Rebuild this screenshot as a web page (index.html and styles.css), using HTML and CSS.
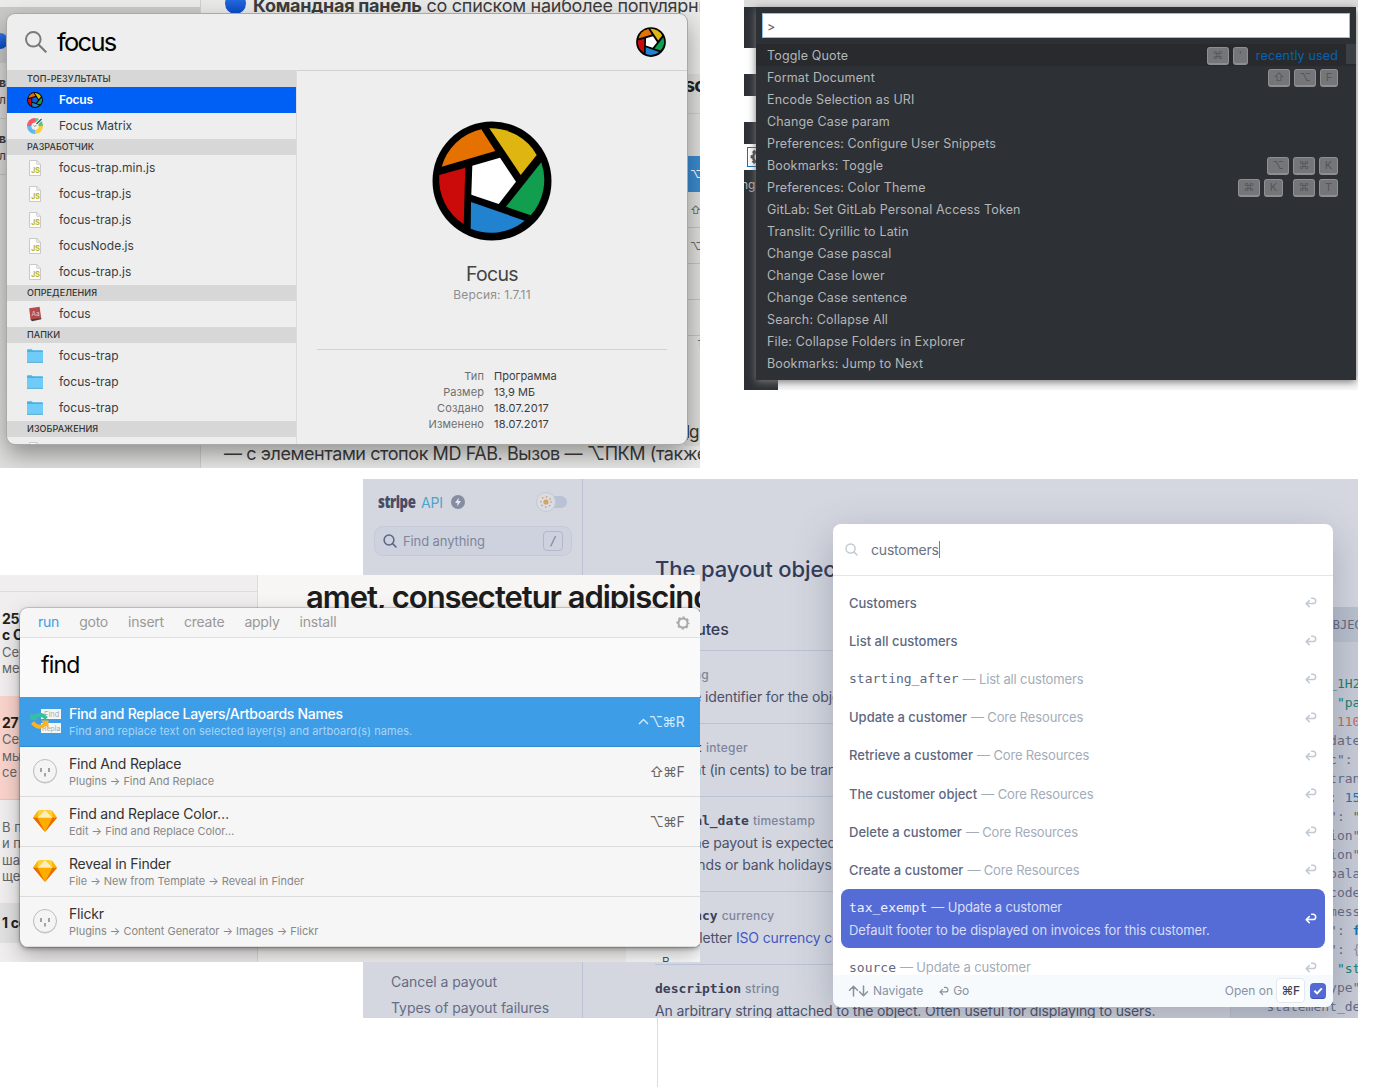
FILE: index.html
```html
<!DOCTYPE html>
<html lang="ru">
<head>
<meta charset="utf-8">
<title>Command palettes</title>
<link rel="stylesheet" href="styles.css">
</head>
<body>
<svg class="defs" width="0" height="0" aria-hidden="true">
  <defs>
    <symbol id="shutter" viewBox="0 0 120 120">
      <circle cx="60" cy="60" r="59.5" fill="#000"/>
      <path d="M49.3 8.3 63.3 30 9.7 45.7A53 53 0 0 1 49.3 8.3Z" fill="#e57200"/>
      <path d="M57.3 7.3 88.7 54 104.7 34A53 53 0 0 0 57.3 7.3Z" fill="#dfb611"/>
      <path d="M109.3 41.3 74 85.7 98.7 94.3A53 53 0 0 0 109.3 41.3Z" fill="#119e4e"/>
      <path d="M39 81 92.7 99.7A53 53 0 0 1 38.7 107.7Z" fill="#2182cf"/>
      <path d="M7.3 54 33.3 46.7 31.7 103A53 53 0 0 1 7.3 54Z" fill="#cb0a0a"/>
      <path class="shutter-core" d="M40.3 44.7 68 36.7 84 60.7 66.7 83 39.3 73.7Z"/>
    </symbol>
    <symbol id="jsfile" viewBox="0 0 12 16">
      <path d="M.5.5h7.3l3.7 3.7v11.3H.5Z" fill="#fdfdfb" stroke="#c9c9c9"/>
      <path d="M7.8.5v3.7h3.7" fill="none" stroke="#c9c9c9"/>
      <text x="2.2" y="12.6" font-family="Inter, sans-serif" font-weight="700" font-size="7" fill="#b5b52d">JS</text>
    </symbol>
    <symbol id="folder" viewBox="0 0 16 14">
      <path d="M0 1.5Q0 .3 1 .3h3.6l1.2 1H15q1 0 1 1V13H0Z" fill="#46b3e4"/>
      <path d="M0 3h16v10.2H0Z" fill="#6fcbf8"/>
      <path d="M0 13.4h16" stroke="#3b9fce" stroke-width=".8"/>
    </symbol>
    <symbol id="enter" viewBox="0 0 12 11">
      <path d="M6.6 1.2H8a2.7 2.7 0 0 1 0 5.4H1.4M4.3 3.6 1.2 6.6l3.1 3.1" fill="none" stroke="currentColor" stroke-width="1.5" stroke-linecap="round" stroke-linejoin="round"/>
    </symbol>
    <symbol id="plug" viewBox="0 0 26 26">
      <circle cx="13" cy="13.8" r="11.6" fill="#c9c9c9"/>
      <circle cx="13" cy="13" r="11.5" fill="#f4f4f4" stroke="#bdbdbd"/>
      <path d="M9 10v4M17 10v4M13 15v3.4" stroke="#7e8a90" stroke-width="1.5"/>
    </symbol>
    <symbol id="diamond" viewBox="0 0 24 22">
      <path d="M5 .8 12 0l7 .8 5 6.9L12 22 0 7.7Z" fill="#fdad00"/>
      <path d="M5 .8 4.6 7.7H0ZM19 .8l.4 6.9H24Z" fill="#feb400"/>
      <path d="M5 .8 12 0 4.6 7.7ZM19 .8 12 0l7.4 7.7Z" fill="#fdd231"/>
      <path d="M12 0 4.6 7.7h14.8Z" fill="#feeeb7"/>
      <path d="M0 7.7h4.6L12 22ZM24 7.7h-4.6L12 22Z" fill="#ea6c00"/>
    </symbol>
    <symbol id="gear" viewBox="0 0 14 14">
      <circle cx="7" cy="7" r="4.5" fill="none" stroke="currentColor" stroke-width="2"/>
      <circle cx="7" cy="7" r="5.800" fill="none" stroke="currentColor" stroke-width="1.500" stroke-dasharray="2.500 2.055" stroke-dashoffset="1.250"/>
    </symbol>
    <symbol id="lens" viewBox="0 0 14 14">
      <circle cx="6" cy="6" r="4.9" fill="none" stroke="currentColor" stroke-width="1.5"/>
      <path d="m9.6 9.6 3.4 3.4" stroke="currentColor" stroke-width="1.5" stroke-linecap="round"/>
    </symbol>
  </defs>
</svg>

<main class="canvas">

  <!-- Stripe API reference -->
  <section class="shot stripe">
    <aside class="st-side">
      <div class="st-brand">
        <span class="st-logo">stripe</span><span class="st-api">API</span>
        <svg class="st-bolt" viewBox="0 0 14 14"><circle cx="7" cy="7" r="7" fill="#868da3"/><path d="M7.8 2.6 4 7.9h2.5l-.4 3.5L10 6.1H7.4Z" fill="#e4e7ef"/></svg>
        <svg class="st-toggle" viewBox="0 0 32 20"><rect x="8" y="4" width="23" height="12" rx="6" fill="#bac3d3"/><circle cx="10" cy="10" r="9.5" fill="#d9dce4" stroke="#c3c8d4"/><circle cx="10" cy="10" r="2.6" fill="#d5a362"/><circle cx="10" cy="10" r="5.2" fill="none" stroke="#d5a362" stroke-width="1.7" stroke-linecap="round" stroke-dasharray=".01 4.07"/></svg>
      </div>
      <div class="st-search"><svg><use href="#lens"/></svg><span>Find anything</span><kbd>/</kbd></div>
      <nav class="st-nav"><span>Cancel a payout</span><span>Types of payout failures</span></nav>
    </aside>
    <article class="st-doc">
      <h1>The payout object</h1>
      <h2>Attributes</h2>
      <div class="attr"><p class="sig"><code>id</code>string</p><p>Unique identifier for the object.</p></div>
      <div class="attr"><p class="sig"><code>amount</code>integer</p><p>Amount (in cents) to be transferred</p></div>
      <div class="attr tall"><p class="sig"><code>arrival_date</code>timestamp</p><p>Date the payout is expected to arrive</p><p>weekends or bank holidays.</p></div>
      <div class="attr"><p class="sig"><code>currency</code>currency</p><p>Three-letter <a>ISO currency code</a></p></div>
      <div class="attr"><p class="sig"><code>description</code>string</p><p class="last">An arbitrary string attached to the object. Often useful for displaying to users.</p></div>
    </article>
    <div class="st-code">
      <div class="st-code-head">THE PAYOUT OBJECT</div>
<pre>  "id": <b class="g">"po_1H2Kq2"</b>
  "object": <b class="g">"payout"</b>
  "amount": <b class="r">1100</b>
  "arrival_date"
  "automatic": true
  "balance_transaction"
  "created": <b class="b">1593</b>
  "currency": <b class="g">"usd"</b>
  "description"
  "destination"
  "failure_balance"
  "failure_code"
  "failure_message"
  "livemode": <b class="b w">false</b>
  "metadata": <b class="l">{}</b>
  "method": <b class="g">"standard"</b>
  "source_type"
  "statement_descriptor"</pre>
    </div>
    <div class="modal">
      <div class="m-head"><svg><use href="#lens"/></svg><span>customers</span><i class="caret"></i></div>
      <ul class="m-list">
        <li><b>Customers</b><svg><use href="#enter"/></svg></li>
        <li><b>List all customers</b><svg><use href="#enter"/></svg></li>
        <li><code>starting_after</code><em>— List all customers</em><svg><use href="#enter"/></svg></li>
        <li><b>Update a customer</b><em>— Core Resources</em><svg><use href="#enter"/></svg></li>
        <li><b>Retrieve a customer</b><em>— Core Resources</em><svg><use href="#enter"/></svg></li>
        <li><b>The customer object</b><em>— Core Resources</em><svg><use href="#enter"/></svg></li>
        <li><b>Delete a customer</b><em>— Core Resources</em><svg><use href="#enter"/></svg></li>
        <li><b>Create a customer</b><em>— Core Resources</em><svg><use href="#enter"/></svg></li>
        <li class="on"><div><code>tax_exempt</code><em>— Update a customer</em><p>Default footer to be displayed on invoices for this customer.</p></div><svg><use href="#enter"/></svg></li>
        <li><code>source</code><em>— Update a customer</em><svg><use href="#enter"/></svg></li>
      </ul>
      <footer class="m-foot">
        <svg class="updown" viewBox="0 0 20 12"><path d="M5 11V1.5M1 5.3l4-4 4 4M15 1v9.5M11 6.7l4 4 4-4" fill="none" stroke="currentColor" stroke-width="1.5" stroke-linecap="round" stroke-linejoin="round"/></svg>
        <span class="nav">Navigate</span>
        <svg class="ent"><use href="#enter"/></svg><span class="go">Go</span>
        <span class="open">Open on</span><kbd>⌘F</kbd>
        <svg class="check" viewBox="0 0 16 16"><rect width="16" height="16" rx="4" fill="#5469d4"/><path d="M0 12a4 4 0 0 0 4 4h8a4 4 0 0 0 4-4 4 3 0 0 1-4 3H4a4 3 0 0 1-4-3Z" fill="#3f4fae"/><path d="m4.4 7.8 2.7 2.6 4.7-5" fill="none" stroke="#fff" stroke-width="2"/></svg>
      </footer>
    </div>
  </section>

  <!-- Spotlight -->
  <section class="shot mac">
    <div class="notes">
      <div class="notes-side">
        <div class="n-gap"></div>
        <div class="n-sel"><i class="dot"></i></div>
        <div class="n-item"><b>ве</b><span>л</span></div>
        <div class="n-item"><b>ва</b><span>ль</span></div>
      </div>
      <div class="notes-body">
        <p class="n-top"><i class="dot"></i><span><b>Командная панель</b> со списком наиболее популярных</span></p>
        <p class="n-bottom">— с элементами стопок MD FAB. Вызов — ⌥ПКМ (также</p>
      </div>
      <div class="n-edge">
        <b>sc</b>
        <span class="blue">⌥⌘</span><span>⇧</span><span>⌥</span><span></span><span></span>
        <em>т</em><u>lg</u>
      </div>
    </div>
    <div class="spot">
      <header class="spot-head">
        <svg class="spot-lens" viewBox="0 0 22 22"><circle cx="8.3" cy="8.3" r="7.3" fill="none" stroke="#7a7a7a" stroke-width="2"/><path d="m13.5 13.5 7.8 7.8" stroke="#7a7a7a" stroke-width="2.2"/></svg>
        <span>focus</span>
        <svg class="app-sm"><use href="#shutter"/></svg>
      </header>
      <div class="spot-main">
        <div class="spot-list">
          <h6 class="first">ТОП-РЕЗУЛЬТАТЫ</h6>
          <div class="row sel"><svg class="i16 core-blue"><use href="#shutter"/></svg>Focus</div>
          <div class="row"><svg class="i16" viewBox="0 0 16 16"><path d="M8 8V0A8 8 0 0 0 0 8Z" fill="#ef5a6b"/><path d="M8 8V0a8 8 0 0 1 8 8Z" fill="#53c68a"/><path d="M8 8h8a8 8 0 0 1-8 8Z" fill="#fccd3b"/><path d="M8 8v8a8 8 0 0 1-8-8Z" fill="#5fb9ee"/><circle cx="8" cy="8.2" r="3.6" fill="#f1f1f1"/><path d="M7 8.6 14.4.8" stroke="#fff" stroke-width="3"/><path d="m9.500 6 5-5" stroke="#3a5a54" stroke-width="1.5"/><path d="m6.7 7.4 1.2 1.2L9.4 7" stroke="#777" fill="none"/></svg>Focus Matrix</div>
          <h6>РАЗРАБОТЧИК</h6>
          <div class="row"><svg class="js"><use href="#jsfile"/></svg>focus-trap.min.js</div>
          <div class="row"><svg class="js"><use href="#jsfile"/></svg>focus-trap.js</div>
          <div class="row"><svg class="js"><use href="#jsfile"/></svg>focus-trap.js</div>
          <div class="row"><svg class="js"><use href="#jsfile"/></svg>focusNode.js</div>
          <div class="row"><svg class="js"><use href="#jsfile"/></svg>focus-trap.js</div>
          <h6>ОПРЕДЕЛЕНИЯ</h6>
          <div class="row"><svg class="i16" viewBox="0 0 16 16"><path d="M2.2 2.2 12.6.8l1.6 11.4-9.4 2.2-1.3-1Z" fill="#b54a4d"/><path d="m3.5 13.4 10.7-1.4.1 1.2-9.2 2.1Z" fill="#4a3b3b"/><text x="4.6" y="10.4" font-family="Inter, sans-serif" font-size="6.5" fill="#e7c5c2">Aa</text></svg>focus</div>
          <h6>ПАПКИ</h6>
          <div class="row"><svg class="fold"><use href="#folder"/></svg>focus-trap</div>
          <div class="row"><svg class="fold"><use href="#folder"/></svg>focus-trap</div>
          <div class="row"><svg class="fold"><use href="#folder"/></svg>focus-trap</div>
          <h6>ИЗОБРАЖЕНИЯ</h6>
          <div class="row"><svg class="js"><use href="#jsfile"/></svg></div>
        </div>
        <div class="spot-info">
          <svg class="app-lg"><use href="#shutter"/></svg>
          <h3>Focus</h3>
          <p class="ver">Версия: 1.7.11</p>
          <dl>
            <dt>Тип</dt><dd>Программа</dd>
            <dt>Размер</dt><dd>13,9 МБ</dd>
            <dt>Создано</dt><dd class="date">18.07.2017</dd>
            <dt>Изменено</dt><dd class="date">18.07.2017</dd>
          </dl>
        </div>
      </div>
    </div>
  </section>

  <!-- VS Code -->
  <section class="shot code">
    <div class="vs-title"></div>
    <div class="vs-body">
      <div class="vs-strip">
        <span class="d a"></span><span class="w c1"></span><span class="d b"></span><span class="w c2"></span><span class="d b"></span>
        <span class="w c3"><svg><use href="#gear"/></svg></span><span class="d end">ng</span>
      </div>
      <div class="vs-under"></div>
    </div>
    <div class="vs-panel">
      <div class="vs-input">&gt;</div>
      <div class="vs-list">
        <div class="cmd hot">Toggle Quote<span class="keys"><kbd class="g">⌘</kbd><kbd class="q">'</kbd><a>recently used</a></span></div>
        <div class="cmd">Format Document<span class="keys"><kbd class="g">⇧</kbd><kbd class="g">⌥</kbd><kbd class="f">F</kbd></span></div>
        <div class="cmd">Encode Selection as URI</div>
        <div class="cmd">Change Case param</div>
        <div class="cmd">Preferences: Configure User Snippets</div>
        <div class="cmd">Bookmarks: Toggle<span class="keys"><kbd class="g">⌥</kbd><kbd class="g">⌘</kbd><kbd>K</kbd></span></div>
        <div class="cmd">Preferences: Color Theme<span class="keys"><kbd class="g">⌘</kbd><kbd class="sp">K</kbd><kbd class="g">⌘</kbd><kbd>T</kbd></span></div>
        <div class="cmd">GitLab: Set GitLab Personal Access Token</div>
        <div class="cmd">Translit: Cyrillic to Latin</div>
        <div class="cmd">Change Case pascal</div>
        <div class="cmd">Change Case lower</div>
        <div class="cmd">Change Case sentence</div>
        <div class="cmd">Search: Collapse All</div>
        <div class="cmd">File: Collapse Folders in Explorer</div>
        <div class="cmd">Bookmarks: Jump to Next</div>
      </div>
    </div>
  </section>

  <!-- Sketch Runner -->
  <section class="shot sketch">
    <div class="sk-back">
      <div class="sk-side">
        <div class="sk-bar"></div>
        <div class="memo m1"><b>25</b><b>с С</b><span>Сер</span><span>мех</span></div>
        <div class="memo m2"><b>27</b><span>Сер</span><span>мы</span><span>се с</span></div>
        <div class="memo m3"><span>В п</span><span>и п</span><span>ша</span><span>ще</span></div>
        <div class="memo m4"><b>1 со</b></div>
      </div>
      <div class="sk-doc"><h2>amet, consectetur adipiscing</h2><div class="sk-sheet">В</div></div>
    </div>
    <div class="runner">
      <nav><a class="on">run</a><a>goto</a><a>insert</a><a>create</a><a>apply</a><a>install</a><svg><use href="#gear"/></svg></nav>
      <div class="query">find</div>
      <div class="hit on">
        <svg class="fr" viewBox="0 0 32 26"><path d="M11 0h20v10H11ZM11 14h20v10H11Z" fill="#f4f6f7"/><text x="14" y="8" font-family="Inter, sans-serif" font-size="7.5" fill="#a9acae">Find</text><text x="12" y="21.500" font-family="Inter, sans-serif" font-size="7" fill="#a9acae">Repla</text><path d="M3.500 8.500Q10 2.500 16.500 9.500" fill="none" stroke="#35c1a0" stroke-width="3.800"/><path d="M.5 3.500V11h7Z" fill="#35c1a0"/><path d="M2.500 13.500Q9 21.500 15.500 14.500" fill="none" stroke="#fcb322" stroke-width="3.800"/><path d="M18.500 19.500V11.500h-7.500Z" fill="#fcb322"/></svg>
        <div><h4>Find and Replace Layers/Artboards Names</h4><p>Find and replace text on selected layer(s) and artboard(s) names.</p></div><kbd><svg class="ctl" viewBox="0 0 11 7"><path d="m1 6 4.500-4.500L10 6" fill="none" stroke="currentColor" stroke-width="1.400"/></svg>⌥⌘R</kbd>
      </div>
      <div class="hit"><svg class="plug"><use href="#plug"/></svg><div><h4>Find And Replace</h4><p>Plugins → Find And Replace</p></div><kbd>⇧⌘F</kbd></div>
      <div class="hit"><svg class="dia"><use href="#diamond"/></svg><div><h4>Find and Replace Color…</h4><p>Edit → Find and Replace Color…</p></div><kbd>⌥⌘F</kbd></div>
      <div class="hit"><svg class="dia"><use href="#diamond"/></svg><div><h4>Reveal in Finder</h4><p>File → New from Template → Reveal in Finder</p></div></div>
      <div class="hit"><svg class="plug"><use href="#plug"/></svg><div><h4>Flickr</h4><p>Plugins → Content Generator → Images → Flickr</p></div></div>
    </div>
  </section>

  <div class="thread"></div>
</main>
</body>
</html>
```
FILE: styles.css
```css
* { box-sizing: border-box; }
body, h1, h2, h3, h4, h6, p, ul, dl, dd, pre { margin: 0; padding: 0; }
body { font-family: Inter, "DejaVu Sans", sans-serif; background: #fff; }
kbd, code, pre { font-family: "DejaVu Sans Mono", monospace; }
em { font-style: normal; }
svg { flex: none; display: block; }
.defs { position: absolute; }
.canvas { position: relative; width: 1400px; height: 1087px; overflow: hidden; }
.shot { position: absolute; overflow: hidden; white-space: nowrap; }
.shutter-core { fill: var(--core, #fff); }

/* ---------- Spotlight ---------- */
.mac { left: 0; top: 0; width: 700px; height: 468px; color: #3c3c3c; }
.notes { display: flex; height: 468px; background: #e9e9e7; }
.notes-side { flex: none; width: 201px; border-right: 1px solid #cfcfcd; background: linear-gradient(#dadad8 60%, #e0e0de); }
.n-gap { height: 7px; background: #ebebe9; }
.n-sel { height: 56px; background: #cacac8; padding-top: 26px; }
.dot { display: block; flex: none; width: 21px; height: 21px; border-radius: 50%; background: linear-gradient(#2f78ea, #0a49c4); }
.n-sel .dot { width: 16px; height: 16px; margin-left: -8px; }
.n-item { height: 56px; border-bottom: 1px solid #c4c4c2; display: flex; flex-direction: column; padding-top: 11px; font-size: 12px; line-height: 17px; margin-left: -1px; letter-spacing: -.6px; }
.notes-body { flex: 1; min-width: 0; display: flex; flex-direction: column; justify-content: space-between; padding-left: 23px; }
.notes-body p { font-size: 18px; line-height: 22px; }
.n-top { display: flex; gap: 7px; margin-top: -5px; }
.n-top .dot { margin: -2px 0 0 1px; }
.n-top span { letter-spacing: -0.260px; }
.n-bottom { margin-bottom: 3px; letter-spacing: -0.420px; }
.n-edge { position: absolute; left: 684px; top: 74px; width: 16px; display: flex; flex-direction: column; font-size: 11px; color: #666; background: #dededc; height: 372px; }
.n-edge b { font-size: 20px; line-height: 22px; color: #222; height: 40px; border-bottom: 1px solid #ccc; letter-spacing: -1px; }
.n-edge span { height: 36px; border-bottom: 1px solid #c2c2c2; padding: 12px 0 0 6px; line-height: 12px; }
.n-edge .blue { height: 78px; padding-top: 54px; border: 0; color: #fff; background: linear-gradient(transparent 42px, #3a8ace 42px); }
.n-edge em { padding-left: 14px; height: 86px; }
.n-edge u { font-size: 17px; line-height: 20px; padding-left: 2px; letter-spacing: -1px; color: #333; text-decoration: underline dotted #e33; }
.spot { position: absolute; left: 7px; top: 14px; width: 680px; height: 430px; border-radius: 8px; background: #eee; overflow: hidden; box-shadow: 0 0 0 1px #a9a9a9, 0 10px 24px rgba(0,0,0,.38); }
.spot-head { display: flex; align-items: center; height: 56px; padding: 0 21px 0 18px; }
.spot-lens { width: 22px; height: 22px; }
.spot-head span { font-size: 25.500px; letter-spacing: -1.700px; color: #000; margin-left: 10px; flex: 1; padding-bottom: 2px; }
.app-sm { width: 30px; height: 30px; }
.spot-main { display: flex; height: 374px; }
.spot-list { flex: none; width: 290px; border-right: 1px solid #dcdcdc; overflow: hidden; }
.spot-list h6 { height: 16px; line-height: 16px; padding-left: 20px; background: #d7d7d7; font-size: 9px; font-weight: 500; letter-spacing: .08px; color: #333; }
.spot-list h6.first { height: 17px; line-height: 18px; }
.row { display: flex; align-items: center; height: 26px; padding: 0 0 2px 20px; font-size: 12px; }
.row .i16, .row .fold { margin: 2px 16px 0 0; }
.row.sel { background: #0060f6; color: #fff; font-weight: 600; letter-spacing: -.2px; }
.core-blue { --core: #0b5fe0; }
.i16 { width: 16px; height: 16px; }
.row .js { width: 12px; height: 16px; margin: 2px 18px 0 2px; }
.fold { width: 16px; height: 14px; }
.spot-info { flex: 1; border-top: 1px solid #d2d2d2; padding: 50px 20px 0; display: flex; flex-direction: column; align-items: center; }
.app-lg { width: 120px; height: 120px; }
.spot-info h3 { font-size: 19.5px; font-weight: 400; line-height: 24px; margin-top: 21px; color: #444; letter-spacing: -.7px; }
.ver { font-size: 12px; line-height: 16px; margin-top: 1px; color: #8e8e8e; letter-spacing: .15px; }
.spot-info dl { align-self: stretch; margin-top: 46px; padding-top: 18px; border-top: 1px solid #d2d2d2; display: grid; grid-template-columns: 167px 1fr; column-gap: 10px; font-size: 11px; line-height: 16px; }
.spot-info dt { text-align: right; color: #6f6f6f; letter-spacing: .1px; }
.date { letter-spacing: .2px; }

/* ---------- VS Code ---------- */
.code { left: 744px; top: 0; width: 614px; height: 390px; color: #b4b6b8; }
.vs-title { height: 7px; background: #dcdcdc; }
.vs-body { display: flex; height: 383px; }
.vs-strip { width: 34px; background: #2d3035; display: flex; flex-direction: column; }
.vs-strip span { width: 34px; flex: none; }
.vs-strip .a { height: 41px; } .vs-strip .b { height: 22px; }
.vs-strip .w { height: 26px; background: #fff; }
.c3 { padding: 3px; }
.c3 svg { width: 24px; height: 20px; border: 1px solid #0a74c0; color: #444; }
.end { font-size: 12px; padding-top: 7px; margin-left: -3px; }
.vs-under { flex: 1; background: #f8f8f8; }
.vs-panel { position: absolute; left: 12px; top: 7px; width: 600px; height: 373px; background: #2d3035; padding: 6px 6px 0; box-shadow: 0 2px 8px #777; }
.vs-input { height: 25px; border: 1px solid #8cc0e4; background: #fff; color: #555; font-size: 12.500px; line-height: 26px; padding-left: 4px; }
.vs-list { margin: 6px -6px 0; }
.cmd { height: 22px; line-height: 20px; padding: 2px 18px 0 11px; font-size: 12.500px; letter-spacing: .15px; display: flex; justify-content: space-between; align-items: center; }
.cmd.hot { background: linear-gradient(90deg, transparent 590px, #3c4044 590px) 0 0/600px 20px no-repeat, #292a2e; }
.keys { display: flex; gap: 4px; align-items: center; }
.keys a { color: #0562b5; margin-left: 4px; }
.keys kbd { width: 19px; height: 18px; border: 1px solid #8d8f91; border-bottom-width: 2px; border-radius: 3px; background: #74767a; color: #55575a; font: 11px/15px Inter, "DejaVu Sans", sans-serif; text-align: center; letter-spacing: 0; }
.keys .g { width: 22px; } .keys .q { width: 15px; } .keys .f { width: 18px; } .keys .sp { margin-right: 6px; }

/* ---------- Stripe ---------- */
.stripe { left: 363px; top: 479px; width: 995px; height: 539px; display: flex; background: #d4d7e0; color: #4b5169; }
.st-side { flex: none; width: 220px; border-right: 1px solid #bcc3d3; padding: 13px 10px 0 11px; display: flex; flex-direction: column; }
.st-brand { flex: none; display: flex; align-items: center; height: 20px; padding-left: 4px; }
.st-logo { font: 800 17px/20px "Open Sans", sans-serif; letter-spacing: -.6px; color: #474d68; width: 43px; transform: scaleX(.78); transform-origin: 0 50%; }
.st-api { font-size: 14px; color: #4aa5cf; width: 30px; letter-spacing: -.2px; padding-top: 1px; }
.st-bolt { width: 14px; height: 14px; }
.st-toggle { width: 32px; height: 20px; margin-left: 71px; }
.st-search { flex: none; display: flex; align-items: center; height: 30px; margin-top: 14px; border: 1px solid #c5cad8; border-radius: 9px; background: #ced2de; padding: 0 8px; font-size: 13px; letter-spacing: -.1px; color: #7f869b; }
.st-search svg { width: 14px; height: 14px; color: #5c6480; }
.st-search span { flex: 1; margin-left: 6px; }
.st-search kbd { width: 20px; height: 20px; border: 1px solid #b2b8c9; border-radius: 4px; text-align: center; line-height: 18px; }
.st-nav { flex: none; margin-top: 413px; padding-left: 17px; font-size: 14px; letter-spacing: -.05px; line-height: 26px; color: #656c86; display: flex; flex-direction: column; }
.st-doc { flex: none; width: 647px; padding: 74px 0 0 72px; }
.st-doc h1 { font-size: 22px; line-height: 32px; font-weight: 500; color: #343b56; letter-spacing: -.1px; }
.st-doc h2 { font-size: 16px; line-height: 20px; font-weight: 500; color: #343b56; padding: 34px 0 11px; letter-spacing: -.1px; }
.attr { border-top: 1px solid #bac3d4; height: 73px; padding-top: 13px; font-size: 14px; line-height: 22px; letter-spacing: -.14px; }
.attr.tall { height: 95px; }
.attr .sig { font-size: 12px; font-weight: 500; color: #7d859c; letter-spacing: .2px; }
.sig code { font-size: 13px; font-weight: 700; color: #3c4257; margin-right: 4px; letter-spacing: 0; }
.attr a { color: #4257c5; }
.st-code { margin-top: 128px; flex: 1; min-width: 0; background: #c8ccd8; border-left: 1px solid #bcc3d3; }
.st-code-head { height: 35px; background: #b9c0ce; padding-left: 15px; font: 12px/36px "DejaVu Sans Mono", monospace; color: #626a82; }
.st-code pre { font-size: 13px; line-height: 19px; padding: 32px 0 0 12px; color: #666d84; }
.st-code b { font-weight: 400; }
.st-code .g { color: #16826b; } .r { color: #c66a55; } .b { color: #1777b3; } .l { color: #8a91a5; }
.st-code .w { font-weight: 700; }
.modal { position: absolute; left: 470px; top: 45px; width: 500px; height: 483px; border-radius: 8px; background: #fff; overflow: hidden; box-shadow: 0 12px 40px rgba(60,66,87,.3); }
.m-head { height: 52px; display: flex; align-items: center; padding-left: 12px; border-bottom: 1px solid #e1e5ec; font-size: 14px; letter-spacing: -.2px; color: #697386; }
.m-head svg { width: 13px; height: 13px; margin-right: 13px; color: #c0c8d2; }
.caret { width: 1px; height: 17px; background: #4b85e0; }
.m-list { list-style: none; padding: 7px 8px 0; height: 399px; overflow: hidden; font-size: 13px; }
.m-list li { height: 38.200px; padding: 1px 8px 0; display: flex; align-items: center; color: #5e6880; }
.m-list b { font-weight: 500; }
.m-list em { color: #a3acb9; margin-left: 4px; letter-spacing: -.15px; }
.m-list svg { width: 12px; height: 11px; margin: 0 0 0 auto; color: #c1c9d2; }
.m-list .on { height: 59px; background: #556cd6; border-radius: 8px; color: #eef0fb; }
.m-list .on em, .m-list .on p { color: #d8def6; }
.m-list .on p { line-height: 23px; letter-spacing: -.08px; }
.m-list .on div { line-height: 23px; padding-top: 1px; }
.m-list .on svg { color: #fff; }
.m-foot { height: 32px; background: #f7fafd; display: flex; align-items: center; padding: 0 7px 1px 15px; font-size: 12px; color: #8792a2; }
.updown { width: 21px; height: 12px; }
.nav { margin: 0 16px 0 4px; }
.ent { width: 10px; height: 10px; margin-right: 4px; }
.open { margin-left: auto; }
.m-foot kbd { width: 29px; height: 25px; margin: 0 5px 0 3px; border: 1px solid #e3e8ee; border-radius: 4px; background: #fff; color: #3c4257; font: 500 12px/23px Inter, "DejaVu Sans", sans-serif; text-align: center; letter-spacing: -.4px; }
.check { width: 16px; height: 16px; margin-top: 1px; }

/* ---------- Sketch Runner ---------- */
.sketch { left: 0; top: 575px; width: 700px; height: 387px; }
.sk-back { display: flex; height: 387px; }
.sk-side { flex: none; width: 258px; background: #f0eeef; border-right: 1px solid #dddbdb; color: #666; }
.sk-bar { height: 17px; border-bottom: 1px solid #dedcdd; }
.memo { display: flex; flex-direction: column; padding-left: 2px; font-size: 13px; line-height: 16.300px; }
.memo b { color: #222; font-size: 14px; letter-spacing: -.3px; }
.m1 { height: 104px; padding-top: 19px; }
.m2 { height: 104px; padding-top: 19px; background: #fad4cc; border-bottom: 1px solid #e9c3bd; }
.m3 { height: 103px; padding-top: 19px; }
.m4 { height: 40px; padding-top: 12px; background: #e2e1e1; }
.sk-doc { flex: 1; min-width: 0; background: #f8f6f4; display: flex; flex-direction: column; justify-content: space-between; align-items: flex-end; overflow: hidden; }
.sk-doc h2 { align-self: flex-start; padding-left: 48px; font-size: 31px; line-height: 44px; font-weight: 600; letter-spacing: -1.040px; color: #1d1d1d; }
.sk-sheet { width: 74px; height: 16px; padding: 8px 0 0 36px; background: #fff; font-size: 12px; line-height: 16px; overflow: hidden; color: #555; }
.runner { position: absolute; left: 20px; top: 33px; width: 681px; height: 339px; border-radius: 8px; background: #f6f6f6; overflow: hidden; box-shadow: 0 0 0 1px rgba(0,0,0,.14), 0 2px 4px rgba(0,0,0,.3), 0 9px 22px rgba(0,0,0,.28); }
.runner nav { height: 30px; border-bottom: 1px solid #e1e1e1; display: flex; align-items: center; gap: 20px; padding: 0 11px 2px 18px; font-size: 14px; color: #999; letter-spacing: -.23px; }
.runner nav .on { color: #3b9ce6; }
.runner nav svg { width: 14px; height: 14px; margin: 2px 0 0 auto; color: #aaa; }
.query { height: 59px; line-height: 55px; padding-left: 21px; background: #fafafa; font-size: 23px; letter-spacing: -.8px; color: #000; }
.hit { height: 50px; border-bottom: 1px solid #dcdcdc; display: flex; align-items: center; padding: 0 17px 0 13px; }
.hit > div { flex: 1; padding-bottom: 2px; }
.hit h4 { font-size: 14px; line-height: 19px; font-weight: 400; color: #333; letter-spacing: -.22px; }
.hit p { font-size: 11px; line-height: 14px; color: #888; padding-top: 1px; letter-spacing: -.02px; }
.hit kbd { display: flex; align-items: center; font: 14px/20px Inter, "DejaVu Sans", sans-serif; color: #666; letter-spacing: -.7px; }
.hit.on { background: #3d9de7; border-color: #3189cf; padding-left: 10px; }
.hit.on h4 { color: #fff; font-weight: 500; letter-spacing: -.3px; } .hit.on p { color: #a9d6f8; letter-spacing: .06px; } .hit.on kbd { color: #d5ecfd; }
.fr { width: 32px; height: 26px; margin-right: 7px; }
.ctl { width: 11px; height: 7px; }
.plug { width: 26px; height: 26px; margin: -1px 11px 0 -1px; }
.dia { width: 24px; height: 22px; margin: -1px 12px 0 0; }

.thread { position: absolute; left: 657px; top: 1018px; width: 1px; height: 69px; background: #dcdcdc; }
```
